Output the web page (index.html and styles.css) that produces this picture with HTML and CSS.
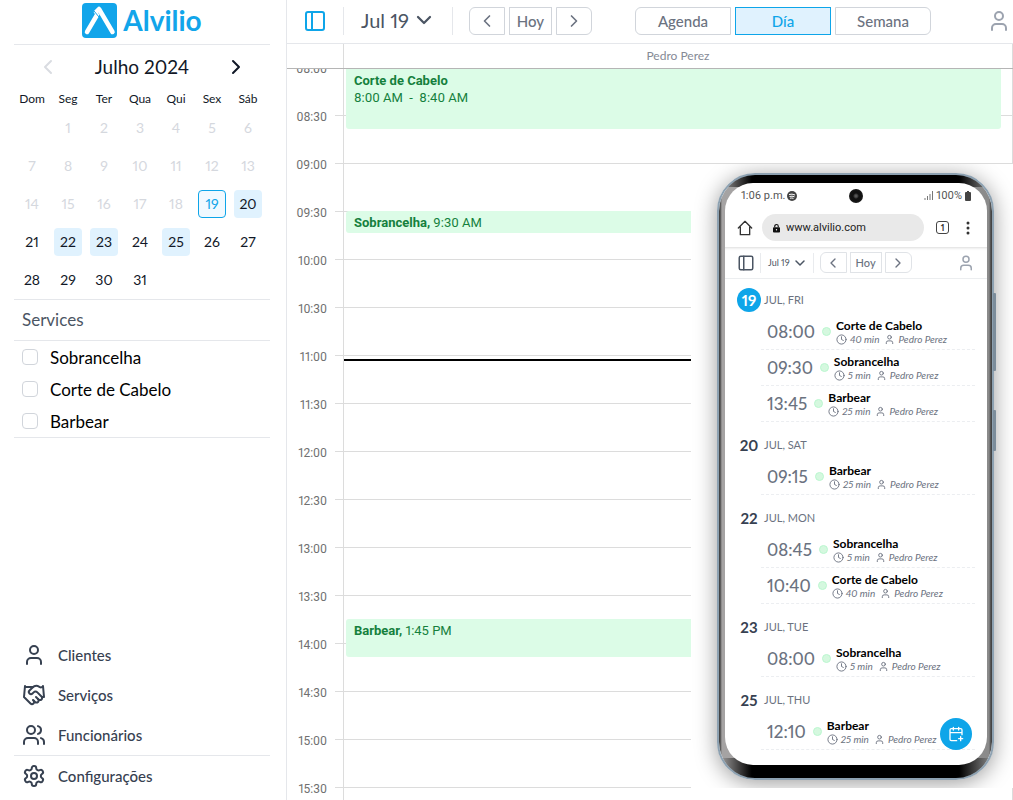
FILE: index.html
```html
<!DOCTYPE html>
<html lang="pt">
<head>
<meta charset="utf-8">
<meta name="viewport" content="width=device-width, initial-scale=1">
<title>Alvilio</title>
<link rel="stylesheet" href="styles.css">
</head>
<body>
<svg class="sprite" aria-hidden="true">
  <symbol id="i-user" viewBox="0 0 24 24"><path d="M19 21v-2a4 4 0 0 0-4-4H9a4 4 0 0 0-4 4v2"/><circle cx="12" cy="7" r="4"/></symbol>
  <symbol id="i-users" viewBox="0 0 24 24"><path d="M16 21v-2a4 4 0 0 0-4-4H6a4 4 0 0 0-4 4v2"/><circle cx="9" cy="7" r="4"/><path d="M22 21v-2a4 4 0 0 0-3-3.87M16 3.13a4 4 0 0 1 0 7.75"/></symbol>
  <symbol id="i-hands" viewBox="0 0 24 24"><path d="m11 17 2 2a1 1 0 1 0 3-3"/><path d="m14 14 2.5 2.5a1 1 0 1 0 3-3l-3.88-3.88a3 3 0 0 0-4.24 0l-.88.88a1 1 0 1 1-3-3l2.81-2.81a5.79 5.79 0 0 1 7.06-.87l.47.28a2 2 0 0 0 1.42.25L21 4"/><path d="m21 3 1 11h-2M3 3 2 14l6.5 6.5a1 1 0 1 0 3-3M3 4h8"/></symbol>
  <symbol id="i-gear" viewBox="0 0 24 24"><path d="M12.22 2h-.44a2 2 0 0 0-2 2v.18a2 2 0 0 1-1 1.73l-.43.25a2 2 0 0 1-2 0l-.15-.08a2 2 0 0 0-2.73.73l-.22.38a2 2 0 0 0 .73 2.73l.15.1a2 2 0 0 1 1 1.72v.51a2 2 0 0 1-1 1.74l-.15.09a2 2 0 0 0-.73 2.73l.22.38a2 2 0 0 0 2.73.73l.15-.08a2 2 0 0 1 2 0l.43.25a2 2 0 0 1 1 1.73V20a2 2 0 0 0 2 2h.44a2 2 0 0 0 2-2v-.18a2 2 0 0 1 1-1.73l.43-.25a2 2 0 0 1 2 0l.15.08a2 2 0 0 0 2.73-.73l.22-.39a2 2 0 0 0-.73-2.73l-.15-.08a2 2 0 0 1-1-1.74v-.5a2 2 0 0 1 1-1.74l.15-.09a2 2 0 0 0 .73-2.73l-.22-.38a2 2 0 0 0-2.73-.73l-.15.08a2 2 0 0 1-2 0l-.43-.25a2 2 0 0 1-1-1.73V4a2 2 0 0 0-2-2z"/><circle cx="12" cy="12" r="3"/></symbol>
  <symbol id="i-panel" viewBox="0 0 24 24"><rect x="3" y="3" width="18" height="18" rx="2"/><path d="M9 3v18"/></symbol>
  <symbol id="i-left" viewBox="0 0 24 24"><path d="m15 18-6-6 6-6"/></symbol>
  <symbol id="i-right" viewBox="0 0 24 24"><path d="m9 18 6-6-6-6"/></symbol>
  <symbol id="i-down" viewBox="0 0 24 24"><path d="m4 8 8 8 8-8"/></symbol>
  <symbol id="i-clock" viewBox="0 0 24 24"><circle cx="12" cy="12" r="10"/><path d="M12 6v6l4 2"/></symbol>
  <symbol id="i-home" viewBox="0 0 24 24"><path d="M2 12 12 2l10 10M5 10v12h14V10"/></symbol>
  <symbol id="i-calplus" viewBox="0 0 24 24"><path d="M21 13V6a2 2 0 0 0-2-2H5a2 2 0 0 0-2 2v14a2 2 0 0 0 2 2h8M16 2v4M8 2v4M3 10h18M19 16v6M16 19h6"/></symbol>
</svg>

<div class="app">
  <aside class="sidebar">
    <a class="logo" href="#">
      <svg class="logo-mark" viewBox="0 0 35 35" aria-hidden="true"><rect width="35" height="35" rx="4" fill="#12a5ea"/><path d="M5 29 15 12M14 9l3-3 13.500 23" fill="none" stroke="#fff" stroke-width="4.500" stroke-linecap="round" stroke-linejoin="round"/><path d="m12 8 5 6" stroke="#12a5ea" stroke-width="1"/></svg>
      <span>Alvilio</span>
    </a>

    <section class="month">
      <div class="month-head">
        <button class="plain off" aria-label="Mês anterior"><svg class="icon"><use href="#i-left"/></svg></button>
        <h2>Julho 2024</h2>
        <button class="plain" aria-label="Próximo mês"><svg class="icon"><use href="#i-right"/></svg></button>
      </div>
      <div class="days names"><span>Dom</span><span>Seg</span><span>Ter</span><span>Qua</span><span>Qui</span><span>Sex</span><span>Sáb</span></div>
      <div class="days">
        <span></span><button disabled>1</button><button disabled>2</button><button disabled>3</button><button disabled>4</button><button disabled>5</button><button disabled>6</button>
        <button disabled>7</button><button disabled>8</button><button disabled>9</button><button disabled>10</button><button disabled>11</button><button disabled>12</button><button disabled>13</button>
        <button disabled>14</button><button disabled>15</button><button disabled>16</button><button disabled>17</button><button disabled>18</button><button class="today">19</button><button class="busy">20</button>
        <button>21</button><button class="busy">22</button><button class="busy">23</button><button>24</button><button class="busy">25</button><button>26</button><button>27</button>
        <button>28</button><button>29</button><button>30</button><button>31</button>
      </div>
    </section>

    <h3 class="services-title">Services</h3>
    <div class="services">
      <label><input type="checkbox">Sobrancelha</label>
      <label><input type="checkbox">Corte de Cabelo</label>
      <label><input type="checkbox">Barbear</label>
    </div>

    <nav class="menu">
      <a href="#"><svg class="icon"><use href="#i-user"/></svg>Clientes</a>
      <a href="#"><svg class="icon"><use href="#i-hands"/></svg>Serviços</a>
      <a href="#"><svg class="icon"><use href="#i-users"/></svg>Funcionários</a>
      <a class="last" href="#"><svg class="icon"><use href="#i-gear"/></svg>Configurações</a>
    </nav>
  </aside>

  <main class="main">
    <header class="toolbar">
      <button class="plain panel" aria-label="Menu"><svg class="icon"><use href="#i-panel"/></svg></button>
      <button class="plain date">Jul 19 <svg class="icon"><use href="#i-down"/></svg></button>
      <div class="group nav">
        <button aria-label="Anterior"><svg class="icon"><use href="#i-left"/></svg></button>
        <button>Hoy</button>
        <button aria-label="Siguiente"><svg class="icon"><use href="#i-right"/></svg></button>
      </div>
      <div class="group views">
        <button>Agenda</button>
        <button class="on">Día</button>
        <button>Semana</button>
      </div>
      <button class="plain account" aria-label="Cuenta"><svg class="icon"><use href="#i-user"/></svg></button>
    </header>

    <div class="resource"><span>Pedro Perez</span></div>

    <div class="schedule">
      <div class="gutter">
        <div><span>08:00</span></div><div><span>08:30</span></div><div><span>09:00</span></div><div><span>09:30</span></div>
        <div><span>10:00</span></div><div><span>10:30</span></div><div><span>11:00</span></div><div><span>11:30</span></div>
        <div><span>12:00</span></div><div><span>12:30</span></div><div><span>13:00</span></div><div><span>13:30</span></div>
        <div><span>14:00</span></div><div><span>14:30</span></div><div><span>15:00</span></div><div><span>15:30</span></div>
      </div>
      <div class="lane">
        <article class="event" style="top:0px;height:62px"><b>Corte de Cabelo</b><br>8:00 AM &nbsp;-&nbsp; 8:40 AM</article>
        <article class="event" style="top:144px;height:22px"><b>Sobrancelha,</b> 9:30 AM</article>
        <article class="event" style="top:552px;height:38px"><b>Barbear,</b> 1:45 PM</article>
        <div class="now" style="top:292px"></div>
      </div>
    </div>

    <div class="preview">
      <div class="phone">
        <div class="screen">
          <div class="status"><span>1:06 p.m.</span>
            <svg class="spot" viewBox="0 0 10 10"><circle cx="5" cy="5" r="5" fill="#444"/><path d="M2 3.500q3-1 6 .5M2.500 5.500q2.500-.8 5 .3M3 7.200q2-.5 3.500.2" stroke="#fff" fill="none"/></svg>
            <svg class="signal" viewBox="0 0 9 9"><path d="M1 9V7M3.500 9V5M6 9V3M8.500 9V0" stroke="#777" fill="none"/></svg>
            <span>100%</span>
            <svg class="battery" viewBox="0 0 6 10"><path d="M2 0h2v1h1q1 0 1 1v7q0 1-1 1H1q-1 0-1-1V2q0-1 1-1h1z" fill="#444"/></svg>
          </div>
          <div class="browser">
            <svg class="icon home"><use href="#i-home"/></svg>
            <div class="url"><svg viewBox="0 0 8 10"><path d="M2 4V3a2 2 0 0 1 4 0v1" fill="none" stroke="#111" stroke-width="1.300"/><rect y="4" width="8" height="6" rx="1" fill="#111"/><circle cx="4" cy="7" r=".8" fill="#fff"/></svg>www.alvilio.com</div>
            <span class="tabs">1</span>
            <svg class="dots" viewBox="0 0 4 14"><circle cx="2" cy="2" r="1.500"/><circle cx="2" cy="7" r="1.500"/><circle cx="2" cy="12" r="1.500"/></svg>
          </div>
          <div class="mini">
            <button class="plain" aria-label="Menu"><svg class="icon"><use href="#i-panel"/></svg></button>
            <button class="plain date">Jul 19 <svg class="icon"><use href="#i-down"/></svg></button>
            <div class="group">
              <button aria-label="Anterior"><svg class="icon"><use href="#i-left"/></svg></button>
              <button>Hoy</button>
              <button aria-label="Siguiente"><svg class="icon"><use href="#i-right"/></svg></button>
            </div>
            <button class="plain account" aria-label="Cuenta"><svg class="icon"><use href="#i-user"/></svg></button>
          </div>
          <div class="agenda">
            <h4><b class="current">19</b>JUL, FRI</h4>
            <div class="item"><time>08:00</time><i class="dot"></i><div><strong>Corte de Cabelo</strong><p><svg class="icon"><use href="#i-clock"/></svg>40 min<svg class="icon who"><use href="#i-user"/></svg>Pedro Perez</p></div></div>
            <div class="item"><time>09:30</time><i class="dot"></i><div><strong>Sobrancelha</strong><p><svg class="icon"><use href="#i-clock"/></svg>5 min<svg class="icon who"><use href="#i-user"/></svg>Pedro Perez</p></div></div>
            <div class="item"><time>13:45</time><i class="dot"></i><div><strong>Barbear</strong><p><svg class="icon"><use href="#i-clock"/></svg>25 min<svg class="icon who"><use href="#i-user"/></svg>Pedro Perez</p></div></div>
            <h4><b>20</b>JUL, SAT</h4>
            <div class="item"><time>09:15</time><i class="dot"></i><div><strong>Barbear</strong><p><svg class="icon"><use href="#i-clock"/></svg>25 min<svg class="icon who"><use href="#i-user"/></svg>Pedro Perez</p></div></div>
            <h4><b>22</b>JUL, MON</h4>
            <div class="item"><time>08:45</time><i class="dot"></i><div><strong>Sobrancelha</strong><p><svg class="icon"><use href="#i-clock"/></svg>5 min<svg class="icon who"><use href="#i-user"/></svg>Pedro Perez</p></div></div>
            <div class="item"><time>10:40</time><i class="dot"></i><div><strong>Corte de Cabelo</strong><p><svg class="icon"><use href="#i-clock"/></svg>40 min<svg class="icon who"><use href="#i-user"/></svg>Pedro Perez</p></div></div>
            <h4><b>23</b>JUL, TUE</h4>
            <div class="item"><time>08:00</time><i class="dot"></i><div><strong>Sobrancelha</strong><p><svg class="icon"><use href="#i-clock"/></svg>5 min<svg class="icon who"><use href="#i-user"/></svg>Pedro Perez</p></div></div>
            <h4><b>25</b>JUL, THU</h4>
            <div class="item"><time>12:10</time><i class="dot"></i><div><strong>Barbear</strong><p><svg class="icon"><use href="#i-clock"/></svg>25 min<svg class="icon who"><use href="#i-user"/></svg>Pedro Perez</p></div></div>
          </div>
        </div>
        <span class="camera"></span>
        <span class="key volume"></span>
        <span class="key power"></span>
        <button class="fab" aria-label="Nueva cita"><svg class="icon"><use href="#i-calplus"/></svg></button>
      </div>
    </div>
  </main>
</div>
</body>
</html>
```

FILE: styles.css
```css
* { box-sizing: border-box; }
body {
  margin: 0;
  background: #fff;
  color: #111827;
  font-family: Lato, "Open Sans", sans-serif;
  font-variant-numeric: proportional-nums;
}
h2, h3, h4, p { margin: 0; font-weight: 400; }
button { font: inherit; color: inherit; background: none; border: 0; padding: 0; }
a { color: inherit; text-decoration: none; }
.sprite { display: none; }
.icon {
  width: 24px;
  height: 24px;
  flex: none;
  fill: none;
  stroke: currentColor;
  stroke-width: 2;
  stroke-linecap: round;
  stroke-linejoin: round;
}
.plain { display: flex; align-items: center; }

.app { display: grid; grid-template: minmax(0, 1fr) / 287px minmax(0, 1fr); height: 100vh; overflow: hidden; }

/* Sidebar */
.sidebar { display: flex; flex-direction: column; padding: 0 16px 0 14px; border-right: 1px solid #e5e7eb; }
.logo {
  display: flex;
  align-items: center;
  justify-content: center;
  gap: 6px;
  height: 45px;
  padding-bottom: 4px;
  border-bottom: 1px solid #e5e7eb;
  color: #12a5ea;
  font-size: 28px;
  font-weight: 700;
}
.logo-mark { width: 35px; height: 35px; }
.month { height: 255px; border-bottom: 1px solid #e5e7eb; }
.month-head { display: flex; align-items: center; justify-content: space-between; height: 43px; padding: 0 22px; }
.month-head h2 { font-size: 19px; }
.off { color: #d9dce1; }
.days { display: grid; grid-template-columns: repeat(7, 36px); grid-auto-rows: 38px; place-items: center; }
.days.names { grid-auto-rows: 21px; font-size: 12px; }
.days button { width: 28px; height: 28px; padding-bottom: 2px; border-radius: 4px; font-size: 14px; }
.days button:disabled { color: #d5d8de; }
.days .busy { background: #e0f2fe; }
.days .today { border: 1px solid #0ea5e9; background: #f0f9ff; color: #0ea5e9; }
.services-title { height: 41px; padding: 0 8px; border-bottom: 1px solid #e5e7eb; color: #4b5563; font-size: 17px; line-height: 40px; }
.services { border-bottom: 1px solid #e5e7eb; color: #000; font-size: 17px; }
.services label { display: flex; align-items: center; gap: 12px; height: 32px; padding: 0 8px; }
.services input { appearance: none; width: 16px; height: 16px; margin: 0; border: 1px solid #d1d5db; border-radius: 4px; background: #fff; }
.menu { margin-top: auto; padding-bottom: 4px; color: #374151; font-size: 15px; font-weight: 500; }
.menu a { display: flex; align-items: center; gap: 12px; height: 40px; padding: 0 8px; }
.menu .last { height: 41px; border-top: 1px solid #e5e7eb; }

/* Top bar */
.main { position: relative; display: flex; flex-direction: column; min-width: 0; color: #6b7280; }
.toolbar { display: flex; flex: none; align-items: center; height: 44px; padding: 0 2px 2px 16px; border-bottom: 1px solid #e5e7eb; }
.toolbar .panel { color: #0ea5e9; }
.toolbar .date { gap: 6px; height: 28px; margin: 0 16px; padding: 0 19px 2px 17px; border: solid #e5e7eb; border-width: 0 1px; color: #4b5563; font-size: 20px; }
.toolbar .date .icon { width: 18px; height: 18px; stroke-width: 3; }
.group { display: flex; gap: 4px; }
.group button { display: flex; align-items: center; justify-content: center; height: 28px; border: 1px solid #d1d5db; font-weight: 500; }
.group button:first-child { border-radius: 6px 0 0 6px; }
.group button:last-child { border-radius: 0 6px 6px 0; }
.toolbar .group { font-size: 15px; }
.nav button { width: 36px; }
.nav button:nth-child(2) { width: 43px; }
.nav .icon { width: 20px; height: 20px; }
.views { margin-left: 43px; }
.views button { width: 96px; }
.group .on { border-color: #0ea5e9; background: #e0f2fe; color: #0ea5e9; }
.toolbar .account { margin-left: auto; color: #9ca3af; }

/* Day schedule */
.resource { display: flex; flex: none; height: 25px; padding-left: 56px; border-bottom: 1px solid #b5b5b5; color: #858a96; font-size: 12px; line-height: 24px; }
.resource span { flex: 1; border: solid #dcdcdc; border-width: 0 1px; text-align: center; }
.schedule { display: flex; flex: 1; min-height: 0; overflow: hidden; font-family: Roboto, sans-serif; }
.gutter { width: 56px; margin-top: -2px; color: #707070; font-size: 12px; line-height: 16px; }
.gutter div { display: flex; justify-content: flex-end; height: 48px; }
.gutter span { margin: -6px 8px 0 0; }
.gutter div::after { content: ""; width: 8px; border-top: 1px solid #dcdcdc; }
.lane {
  position: relative;
  flex: 1;
  height: 768px;
  margin-top: -2px;
  border: solid #dcdcdc;
  border-width: 0 1px;
  background: repeating-linear-gradient(#dcdcdc 0 1px, transparent 1px 48px);
}
.event { position: absolute; left: 2px; right: 11px; padding: 3px 8px; border-radius: 3px; background: #dcfce7; color: #15803d; font-size: 13px; line-height: 17px; }
.lane .event:first-child { padding-top: 5px; }
.now { position: absolute; left: 0; right: 0; height: 2px; background: #000; }

/* Phone */
.preview { position: absolute; top: 164px; right: 0; width: 322px; height: 624px; padding: 9px 19px 8px 26px; overflow: hidden; background: #fff; }
.phone {
  position: relative;
  height: 607px;
  padding: 8px 5px 13px 6px;
  border: 2px solid #8da1b1;
  border-radius: 38px;
  background:
    linear-gradient(90deg, transparent, #000 12%, #000 88%, transparent) top / 100% 12px no-repeat,
    linear-gradient(90deg, transparent, #000 12%, #000 88%, transparent) bottom / 100% 20px no-repeat,
    linear-gradient(90deg, #444 0 1px, #a5a3a3 3px 50%, #8a8a8a calc(100% - 3px), #444 calc(100% - 1px)) padding-box;
  box-shadow: 0 3px 22px rgba(0, 0, 0, .4);
}
.screen { height: 100%; overflow: hidden; border-radius: 28px; background: #fff; }
.status { display: flex; align-items: center; height: 25px; padding: 0 16px; color: #555; font-family: Roboto, sans-serif; font-size: 11px; }
.spot { width: 10px; height: 10px; margin-left: 2px; }
.signal { width: 9px; height: 9px; margin: 0 3px 0 auto; }
.battery { width: 6px; height: 10px; margin-left: 3px; }
.browser { display: flex; align-items: center; height: 39px; padding: 0 17px 0 12px; color: #333; }
.browser .home { width: 16px; height: 16px; }
.url { display: flex; flex: 1; align-items: center; gap: 6px; height: 27px; margin: 0 12px 0 9px; padding-left: 11px; border-radius: 14px; background: #e9e9e9; color: #222; font-family: Roboto, sans-serif; font-size: 11px; }
.url svg { width: 7px; height: 10px; }
.tabs { width: 13px; height: 13px; border: 1px solid #444; border-radius: 3px; font-size: 9px; font-weight: 700; line-height: 11px; text-align: center; }
.dots { width: 4px; height: 14px; margin-left: 17px; fill: #333; }
.mini { display: flex; align-items: center; height: 32px; padding: 0 12px; border-bottom: 1px solid #eceef0; box-shadow: inset 0 3px 3px -2px rgba(0, 0, 0, .15); }
.mini .plain { color: #4b5563; }
.mini .icon { width: 18px; height: 18px; }
.mini .date { gap: 4px; height: 20px; margin: 0 6px 0 5px; padding: 0 7px; border: solid #e9ebee; border-width: 0 1px; font-size: 9px; }
.mini .date .icon { width: 12px; height: 12px; stroke-width: 3; }
.mini .group { gap: 3px; font-size: 11px; }
.mini .group button { width: 27px; height: 21px; border-color: #e0e3e7; }
.mini .group button:nth-child(2) { width: 32px; }
.mini .group .icon { width: 16px; height: 16px; }
.mini .account { margin-left: auto; color: #9ca3af; }
.agenda { padding: 0 12px; }
.agenda h4 { display: flex; align-items: center; gap: 3px; height: 37px; padding-top: 8px; font-size: 11px; }
.agenda h4:first-child { height: 35px; padding-top: 6px; }
.agenda b { width: 24px; color: #374151; font-size: 15px; line-height: 24px; text-align: center; }
.agenda .current { border-radius: 50%; background: #0ea5e9; color: #fff; }
.item { display: flex; align-items: center; height: 36px; margin-left: 24px; padding-left: 6px; border-bottom: 1px dashed #eceef1; }
.item time { font-size: 17px; font-weight: 500; }
.dot { width: 9px; height: 9px; margin: 0 5px 0 7px; border: 1px solid #bbf7d0; border-radius: 50%; background: #d5f8df; }
.item strong { display: block; color: #000; font-size: 12px; line-height: 15px; }
.item p { display: flex; align-items: center; font-size: 10px; font-style: italic; line-height: 12px; }
.item .icon { width: 11px; height: 11px; margin-right: 3px; }
.item .who { margin-left: 5px; }
.camera { position: absolute; top: 14px; left: 130px; width: 14px; height: 14px; border-radius: 50%; background: radial-gradient(#555 0 1px, #111 3px 5px, #2a2a2a); }
.key { position: absolute; right: -4px; width: 3px; border-radius: 1px; background: #7c8d9b; }
.volume { top: 118px; height: 78px; }
.power { top: 235px; height: 41px; }
.fab { position: absolute; right: 20px; bottom: 28px; display: grid; place-items: center; width: 32px; height: 32px; border-radius: 50%; background: #0ea5e9; color: #fff; }
.fab .icon { width: 16px; height: 16px; }
```
